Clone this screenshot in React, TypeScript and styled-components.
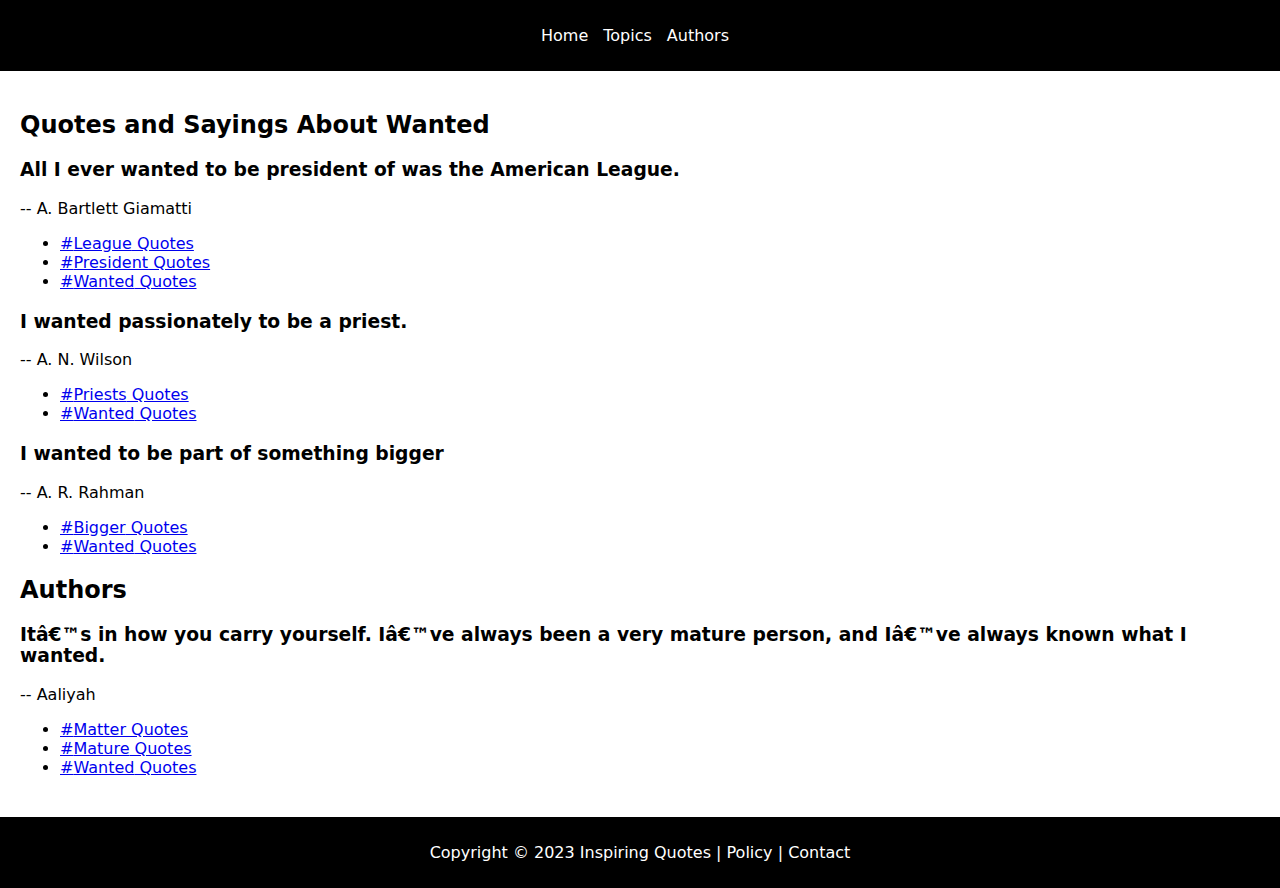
import React from "react";
import styled, { createGlobalStyle } from "styled-components";

const GlobalStyle = createGlobalStyle`
  html, body { margin: 0; padding: 0; background: #fff; }
  body { font-family: "DejaVu Sans", sans-serif; font-size: 16px; color: #000; }
`;

const Header = styled.header`
  background: #000;
  height: 71px;
  display: flex;
  align-items: center;
  justify-content: center;
`;

const Nav = styled.nav`
  display: flex;
  gap: 15px;
  padding-right: 10px;
`;

const NavLink = styled.a`
  color: #fff;
  text-decoration: none;
  font-size: 16px;
`;

const Main = styled.main`
  padding: 20px;
`;

const PageTitle = styled.h2`
  font-size: 24px;
  font-weight: bold;
  margin: 19.92px 0;
`;

const QuoteBlock = styled.div`
  margin-bottom: 20px;
`;

const QuoteText = styled.h3`
  font-size: 18.72px;
  font-weight: bold;
  margin: 18.72px 0;
`;

const Author = styled.p`
  margin: 16px 0;
`;

const TagList = styled.ul`
  margin: 16px 0;
  padding-left: 40px;
`;

const TagLink = styled.a`
  color: #0000ee;
  text-decoration: underline;
`;

const Footer = styled.footer`
  background: #000;
  height: 71px;
  display: flex;
  align-items: center;
  justify-content: center;
  color: #fff;
`;

const FooterLink = styled.a`
  color: #fff;
  text-decoration: none;
`;

type Quote = { text: string; author: string; tags: string[] };

const quotes: Quote[] = [
  {
    text: "All I ever wanted to be president of was the American League.",
    author: "A. Bartlett Giamatti",
    tags: ["League", "President", "Wanted"],
  },
  {
    text: "I wanted passionately to be a priest.",
    author: "A. N. Wilson",
    tags: ["Priests", "Wanted"],
  },
  {
    text: "I wanted to be part of something bigger",
    author: "A. R. Rahman",
    tags: ["Bigger", "Wanted"],
  },
];

const authorQuotes: Quote[] = [
  {
    text: "It\u00e2\u20ac\u2122s in how you carry yourself. I\u00e2\u20ac\u2122ve always been a very mature person, and I\u00e2\u20ac\u2122ve always known what I wanted.",
    author: "Aaliyah",
    tags: ["Matter", "Mature", "Wanted"],
  },
];

const QuoteItem = ({ q }: { q: Quote }) => (
  <QuoteBlock>
    <QuoteText>{q.text}</QuoteText>
    <Author>-- {q.author}</Author>
    <TagList>
      {q.tags.map((t) => (
        <li key={t}>
          <TagLink href="#">#{t} Quotes</TagLink>
        </li>
      ))}
    </TagList>
  </QuoteBlock>
);

export default function App() {
  return (
    <>
      <GlobalStyle />
      <Header>
        <Nav>
          <NavLink href="#">Home</NavLink>
          <NavLink href="#">Topics</NavLink>
          <NavLink href="#">Authors</NavLink>
        </Nav>
      </Header>
      <Main>
        <PageTitle>Quotes and Sayings About Wanted</PageTitle>
        {quotes.map((q) => (
          <QuoteItem key={q.text} q={q} />
        ))}
        <PageTitle>Authors</PageTitle>
        {authorQuotes.map((q) => (
          <QuoteItem key={q.text} q={q} />
        ))}
      </Main>
      <Footer>
        Copyright © 2023 Inspiring Quotes |&nbsp;<FooterLink href="#">Policy</FooterLink>&nbsp;|&nbsp;
        <FooterLink href="#">Contact</FooterLink>
      </Footer>
    </>
  );
}
